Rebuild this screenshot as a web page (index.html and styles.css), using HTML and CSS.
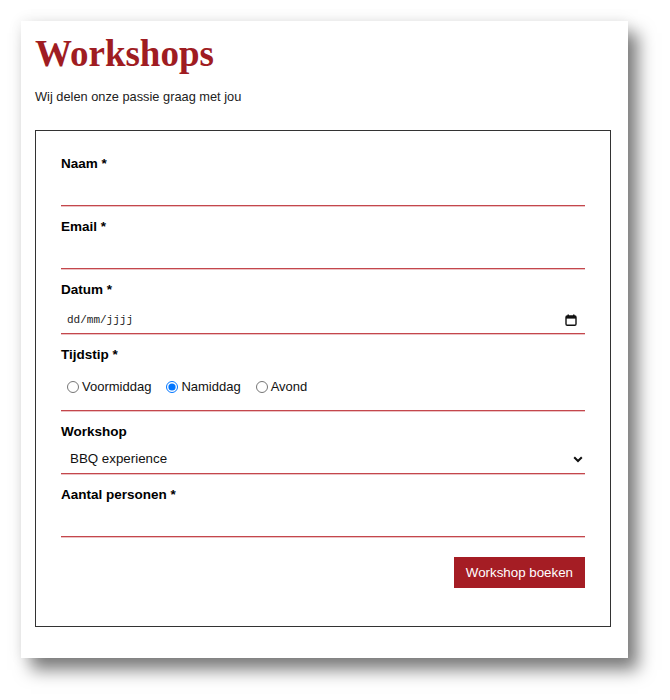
FILE: index.html
```html
<!DOCTYPE html>
<html lang="nl">
<head>
    <meta charset="UTF-8">
    <meta name="viewport" content="width=device-width, initial-scale=1.0">
    <title>Workshops</title>
    <link rel="stylesheet" href="styles.css">
</head>
<body>
    <div class="page">
        <div class="card">
            <h1>Workshops</h1>
            <p class="intro">Wij delen onze passie graag met jou</p>
            <form class="booking" action="#" method="POST">
                <div class="field">
                    <label for="naam">Naam *</label>
                    <input type="text" id="naam" name="naam">
                </div>
                <div class="field">
                    <label for="email">Email *</label>
                    <input type="email" id="email" name="email">
                </div>
                <div class="field">
                    <label for="datum">Datum *</label>
                    <div class="date-field">
                        <input type="text" id="datum" name="datum" placeholder="dd/mm/jjjj">
                        <svg class="cal-icon" width="12" height="12" viewBox="0 0 12 12">
                            <rect x="2.5" y="0.5" width="1.5" height="2" fill="#111"/>
                            <rect x="8" y="0.5" width="1.5" height="2" fill="#111"/>
                            <rect x="1" y="2" width="10" height="9.2" rx="1.2" fill="none" stroke="#111" stroke-width="1.4"/>
                            <rect x="1" y="2" width="10" height="2.6" fill="#111"/>
                        </svg>
                    </div>
                </div>
                <div class="field">
                    <label>Tijdstip *</label>
                    <div class="radios">
                        <label class="radio"><input type="radio" name="tijdstip" value="voormiddag">Voormiddag</label>
                        <label class="radio"><input type="radio" name="tijdstip" value="namiddag" checked>Namiddag</label>
                        <label class="radio"><input type="radio" name="tijdstip" value="avond">Avond</label>
                    </div>
                </div>
                <div class="field">
                    <label for="workshop">Workshop</label>
                    <div class="select-field">
                        <select id="workshop" name="workshop">
                            <option>BBQ experience</option>
                            <option>Pasta maken</option>
                            <option>Sushi workshop</option>
                        </select>
                        <svg class="chevron" width="10" height="7" viewBox="0 0 10 7">
                            <path d="M1.2 1.2 L5 5 L8.8 1.2" fill="none" stroke="#111" stroke-width="2"/>
                        </svg>
                    </div>
                </div>
                <div class="field">
                    <label for="aantal">Aantal personen *</label>
                    <input type="number" id="aantal" name="aantal">
                </div>
                <div class="actions">
                    <button type="submit">Workshop boeken</button>
                </div>
            </form>
        </div>
    </div>
</body>
</html>
```

FILE: styles.css
```css
html, body {
    margin: 0;
    background-color: #fff;
}
body {
    font-family: "Liberation Sans", Arial, sans-serif;
    color: #111;
}
.page {
    min-height: 700px;
    box-sizing: border-box;
    padding: 21px;
}
.card {
    width: 576px;
    padding: 12px 17px 31px 14px;
    background-color: #fff;
    box-shadow: 10px 12px 16px rgba(0, 0, 0, 0.5), 0 0 14px rgba(0, 0, 0, 0.08);
}
.card h1 {
    margin: 0;
    font-family: "Liberation Serif", "Times New Roman", serif;
    font-size: 37px;
    line-height: 42px;
    font-weight: bold;
    color: #9f1c22;
}
.intro {
    margin: 14px 0 25px;
    font-size: 12.8px;
    line-height: 16px;
    color: #222;
}
.booking {
    border: 1px solid #333;
    padding: 23px 25px 38px;
}
.field {
    margin-bottom: 11px;
}
.field > label {
    display: block;
    font-size: 13.5px;
    font-weight: bold;
    line-height: 20px;
    margin-bottom: 2px;
    color: #000;
}
.field input[type="text"],
.field input[type="email"],
.field input[type="number"] {
    display: block;
    width: 100%;
    height: 30px;
    box-sizing: border-box;
    border: none;
    border-bottom: 1px solid #c4474c;
    box-shadow: 0 1px 0 rgba(200, 80, 85, 0.35);
    padding: 4px 6px 0;
    font-family: "Liberation Sans", Arial, sans-serif;
    font-size: 13.33px;
    outline: none;
}
.date-field {
    display: flex;
    align-items: center;
    height: 32px;
    box-sizing: border-box;
    border-bottom: 1px solid #c4474c;
    box-shadow: 0 1px 0 rgba(200, 80, 85, 0.35);
    padding: 4px 8px 0 0;
}
.date-field input[type="text"] {
    flex: 1;
    border-bottom: none;
    box-shadow: none;
    height: auto;
    font-family: "Liberation Mono", "DejaVu Sans Mono", monospace;
    font-size: 11px;
    padding: 0 0 0 6px;
}
.date-field input::placeholder {
    color: #222;
}
.radios {
    display: flex;
    height: 44px;
    padding-top: 9px;
    box-sizing: border-box;
    border-bottom: 1px solid #c4474c;
    box-shadow: 0 1px 0 rgba(200, 80, 85, 0.35);
    font-size: 13px;
    line-height: 21px;
}
.radio {
    display: flex;
    align-items: center;
    height: 21px;
    margin-right: 9px;
}
.radio input {
    width: 12px;
    height: 12px;
    margin: 0 3px 0 6px;
}
.select-field {
    position: relative;
}
.select-field select {
    display: block;
    width: 100%;
    height: 30px;
    appearance: none;
    border: none;
    border-bottom: 1px solid #c4474c;
    box-shadow: 0 1px 0 rgba(200, 80, 85, 0.35);
    border-radius: 0;
    background: #fff;
    padding: 0 9px;
    font-family: "Liberation Sans", Arial, sans-serif;
    font-size: 13.33px;
    color: #111;
    outline: none;
}
.chevron {
    position: absolute;
    right: 2px;
    top: 12px;
    pointer-events: none;
}
.actions {
    display: flex;
    justify-content: flex-end;
    padding-top: 9px;
}
.actions button {
    background-color: #a51d24;
    color: #fff;
    border: none;
    height: 31px;
    padding: 0 12px;
    font-family: "Liberation Sans", Arial, sans-serif;
    font-size: 13.33px;
    cursor: pointer;
}
```
